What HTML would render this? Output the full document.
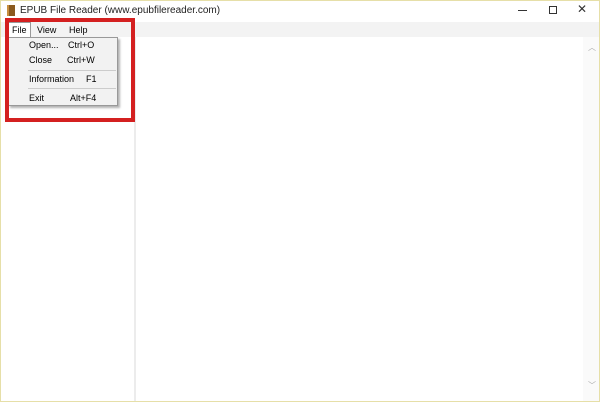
<!DOCTYPE html>
<html><head><style>
*{margin:0;padding:0;box-sizing:border-box}
body{width:600px;height:402px;overflow:hidden;background:#fff;font-family:"Liberation Sans",sans-serif;font-size:9px;color:#000;position:relative}
.abs{position:absolute}
</style></head><body>
<div class="abs" style="left:0;top:0;width:600px;height:402px;border:1px solid #e6dfa8"></div>
<div class="abs" style="left:1px;top:1px;width:598px;height:21px;background:#fff"></div>
<div class="abs" style="left:7px;top:5px;width:8px;height:11px;background:#8a5a20;border-left:2px solid #c89040"></div>
<div class="abs" style="left:20px;top:5px;font-size:10px;color:#222">EPUB File Reader (www.epubfilereader.com)</div>
<div class="abs" style="left:518px;top:10px;width:9px;height:1px;background:#333"></div>
<div class="abs" style="left:549px;top:6px;width:8px;height:8px;border:1px solid #333"></div>
<div class="abs" style="left:577px;top:2px;font-size:12px;color:#333">✕</div>
<div class="abs" style="left:1px;top:22px;width:598px;height:15px;background:#f3f3f3"></div>
<div class="abs" style="left:8px;top:22px;width:23px;height:15px;background:#fff;border:1px solid #999;border-bottom:none"></div>
<div class="abs" style="left:12px;top:25px">File</div>
<div class="abs" style="left:37px;top:25px">View</div>
<div class="abs" style="left:69px;top:25px">Help</div>
<div class="abs" style="left:134px;top:37px;width:2px;height:364px;background:#ececec"></div>
<div class="abs" style="left:583px;top:37px;width:16px;height:364px;background:#fafafa"></div>
<div class="abs" style="left:588px;top:42px;color:#aaa;font-size:8px">︿</div>
<div class="abs" style="left:588px;top:380px;color:#aaa;font-size:8px">﹀</div>
<div class="abs" style="left:8px;top:37px;width:110px;height:69px;background:#f2f2f2;border:1px solid #999;box-shadow:2px 2px 2px rgba(0,0,0,.3)"></div>
<div class="abs" style="left:29px;top:40px">Open...</div><div class="abs" style="left:68px;top:40px">Ctrl+O</div>
<div class="abs" style="left:29px;top:55px">Close</div><div class="abs" style="left:67px;top:55px">Ctrl+W</div>
<div class="abs" style="left:28px;top:70px;width:88px;height:1px;background:#ccc"></div>
<div class="abs" style="left:29px;top:74px">Information</div><div class="abs" style="left:86px;top:74px">F1</div>
<div class="abs" style="left:28px;top:88px;width:88px;height:1px;background:#ccc"></div>
<div class="abs" style="left:29px;top:93px">Exit</div><div class="abs" style="left:70px;top:93px">Alt+F4</div>
<div class="abs" style="left:5px;top:18px;width:130px;height:104px;border:4px solid #d42020"></div>
</body></html>
